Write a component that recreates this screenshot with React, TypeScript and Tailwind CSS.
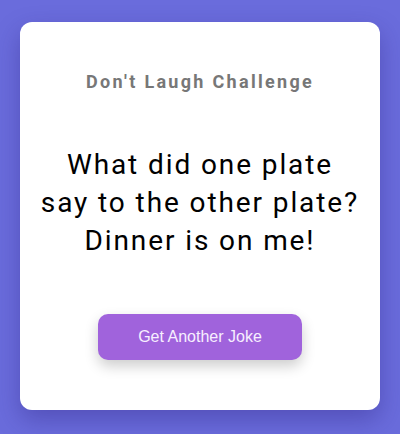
import React, { useState } from "react";

// each joke is pre-broken into display lines
const jokes = [
  ["What did one plate", "say to the other plate?", "Dinner is on me!"],
  ["Why don't eggs tell jokes?", "They'd crack each", "other up."],
  ["What do you call", "fake spaghetti?", "An impasta!"],
];

const App: React.FC = () => {
  const [current, setCurrent] = useState(0);

  return (
    <div className="w-[400px] h-[434px] bg-[#6a6cdc] pt-[22px] px-[20px] font-['Roboto',sans-serif]">
      {/* Card */}
      <div className="h-[388px] bg-white rounded-xl shadow-[0_10px_25px_rgba(40,30,120,0.35)] flex flex-col items-center pt-[48px]">
        <h1 className="text-[18px] leading-[24px] font-bold tracking-[2.3px] text-[#777777]">
          Don't Laugh Challenge
        </h1>

        <p className="mt-[52px] text-center text-[28px] leading-[38px] tracking-[1.9px] text-black whitespace-nowrap">
          {jokes[current].map((line, i) => (
            <span key={i} className="block">
              {line}
            </span>
          ))}
        </p>

        <button
          onClick={() => setCurrent((prev) => (prev + 1) % jokes.length)}
          className="mt-[54px] w-[204px] h-[46px] rounded-[10px] bg-[#a063dc] text-[16px] text-[#f7efff] font-['Liberation_Sans',Arial,sans-serif] shadow-[0_6px_14px_rgba(0,0,0,0.2)]"
        >
          Get Another Joke
        </button>
      </div>
    </div>
  );
};

export default App;
